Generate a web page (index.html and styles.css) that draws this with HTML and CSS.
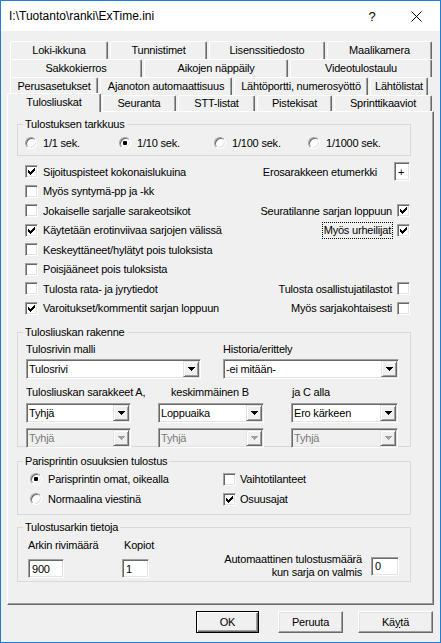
FILE: index.html
```html
<!DOCTYPE html>
<html>
<head>
<meta charset="utf-8">
<link rel="stylesheet" href="styles.css">
</head>
<body>
<div class="window">
  <div class="titlebar">
    <span class="title">I:\Tuotanto\ranki\ExTime.ini</span>
    <span class="help">?</span>
    <span class="close"><svg width="11" height="11" viewBox="0 0 11 11"><path d="M0.5 0.5L10.5 10.5M10.5 0.5L0.5 10.5" stroke="#000" stroke-width="1" fill="none"/></svg></span>
  </div>
  <div class="content">
    <div class="tabs">
      <div class="tabrow r1">
        <div class="tab">Loki-ikkuna</div>
        <div class="tab">Tunnistimet</div>
        <div class="tab">Lisenssitiedosto</div>
        <div class="tab">Maalikamera</div>
      </div>
      <div class="tabrow r2">
        <div class="tab">Sakkokierros</div>
        <div class="tab">Aikojen näppäily</div>
        <div class="tab">Videotulostaulu</div>
      </div>
      <div class="tabrow r3">
        <div class="tab">Perusasetukset</div>
        <div class="tab">Ajanoton automaattisuus</div>
        <div class="tab">Lähtöportti, numerosyöttö</div>
        <div class="tab">Lähtölistat</div>
      </div>
      <div class="tabrow r4">
        <div class="tab sel">Tulosliuskat</div>
        <div class="tab">Seuranta</div>
        <div class="tab">STT-listat</div>
        <div class="tab">Pistekisat</div>
        <div class="tab">Sprinttikaaviot</div>
      </div>
    </div>

    <div class="panel">
      <fieldset class="group g1">
        <legend>Tulostuksen tarkkuus</legend>
        <div class="radios4">
          <label class="opt"><span class="radio"></span>1/1 sek.</label>
          <label class="opt"><span class="radio"><span class="dot"></span></span>1/10 sek.</label>
          <label class="opt"><span class="radio"></span>1/100 sek.</label>
          <label class="opt"><span class="radio"></span>1/1000 sek.</label>
        </div>
      </fieldset>

      <div class="checks">
        <div class="row">
          <label class="opt"><span class="box"><svg class="tick" width="9" height="9" viewBox="0 0 9 9"><path d="M7 1h1v1h-1zM6 2h2v1h-2zM1 3h1v1h-1zM5 3h3v1h-3zM1 4h2v1h-2zM4 4h3v1h-3zM1 5h5v1h-5zM2 6h3v1h-3zM3 7h1v1h-1z"/></svg></span>Sijoituspisteet kokonaislukuina</label>
          <span class="right">Erosarakkeen etumerkki<span class="edit sign">+</span></span>
        </div>
        <div class="row">
          <label class="opt"><span class="box"></span>Myös syntymä-pp ja -kk</label>
        </div>
        <div class="row">
          <label class="opt"><span class="box"></span>Jokaiselle sarjalle sarakeotsikot</label>
          <label class="right">Seuratilanne sarjan loppuun<span class="box"><svg class="tick" width="9" height="9" viewBox="0 0 9 9"><path d="M7 1h1v1h-1zM6 2h2v1h-2zM1 3h1v1h-1zM5 3h3v1h-3zM1 4h2v1h-2zM4 4h3v1h-3zM1 5h5v1h-5zM2 6h3v1h-3zM3 7h1v1h-1z"/></svg></span></label>
        </div>
        <div class="row">
          <label class="opt"><span class="box"><svg class="tick" width="9" height="9" viewBox="0 0 9 9"><path d="M7 1h1v1h-1zM6 2h2v1h-2zM1 3h1v1h-1zM5 3h3v1h-3zM1 4h2v1h-2zM4 4h3v1h-3zM1 5h5v1h-5zM2 6h3v1h-3zM3 7h1v1h-1z"/></svg></span>Käytetään erotinviivaa sarjojen välissä</label>
          <label class="right"><span class="focus">Myös urheilijat</span><span class="box"><svg class="tick" width="9" height="9" viewBox="0 0 9 9"><path d="M7 1h1v1h-1zM6 2h2v1h-2zM1 3h1v1h-1zM5 3h3v1h-3zM1 4h2v1h-2zM4 4h3v1h-3zM1 5h5v1h-5zM2 6h3v1h-3zM3 7h1v1h-1z"/></svg></span></label>
        </div>
        <div class="row">
          <label class="opt"><span class="box"></span>Keskeyttäneet/hylätyt pois tuloksista</label>
        </div>
        <div class="row">
          <label class="opt"><span class="box"></span>Poisjääneet pois tuloksista</label>
        </div>
        <div class="row">
          <label class="opt"><span class="box"></span>Tulosta rata- ja jyrytiedot</label>
          <label class="right">Tulosta osallistujatilastot<span class="box"></span></label>
        </div>
        <div class="row">
          <label class="opt"><span class="box"><svg class="tick" width="9" height="9" viewBox="0 0 9 9"><path d="M7 1h1v1h-1zM6 2h2v1h-2zM1 3h1v1h-1zM5 3h3v1h-3zM1 4h2v1h-2zM4 4h3v1h-3zM1 5h5v1h-5zM2 6h3v1h-3zM3 7h1v1h-1z"/></svg></span>Varoitukset/kommentit sarjan loppuun</label>
          <label class="right">Myös sarjakohtaisesti<span class="box"></span></label>
        </div>
      </div>

      <fieldset class="group g2">
        <legend>Tulosliuskan rakenne</legend>
        <div class="grid2">
          <div class="lbl">Tulosrivin malli</div>
          <div class="lbl">Historia/erittely</div>
          <div class="combo"><span class="val">Tulosrivi</span><span class="drop"><svg width="7" height="4" viewBox="0 0 7 4"><path d="M0 0h7v1h-1v1h-1v1h-1v1h-1v-1h-1v-1h-1v-1h-1z"/></svg></span></div>
          <div class="combo"><span class="val">-ei mitään-</span><span class="drop"><svg width="7" height="4" viewBox="0 0 7 4"><path d="M0 0h7v1h-1v1h-1v1h-1v1h-1v-1h-1v-1h-1v-1h-1z"/></svg></span></div>
        </div>
        <div class="grid3">
          <div class="lbl">Tulosliuskan sarakkeet A,</div>
          <div class="lbl lb">keskimmäinen B</div>
          <div class="lbl lc">ja C alla</div>
          <div class="combo"><span class="val">Tyhjä</span><span class="drop"><svg width="7" height="4" viewBox="0 0 7 4"><path d="M0 0h7v1h-1v1h-1v1h-1v1h-1v-1h-1v-1h-1v-1h-1z"/></svg></span></div>
          <div class="combo"><span class="val">Loppuaika</span><span class="drop"><svg width="7" height="4" viewBox="0 0 7 4"><path d="M0 0h7v1h-1v1h-1v1h-1v1h-1v-1h-1v-1h-1v-1h-1z"/></svg></span></div>
          <div class="combo"><span class="val">Ero kärkeen</span><span class="drop"><svg width="7" height="4" viewBox="0 0 7 4"><path d="M0 0h7v1h-1v1h-1v1h-1v1h-1v-1h-1v-1h-1v-1h-1z"/></svg></span></div>
          <div class="combo dis"><span class="val">Tyhjä</span><span class="drop"><svg width="7" height="4" viewBox="0 0 7 4"><path d="M0 0h7v1h-1v1h-1v1h-1v1h-1v-1h-1v-1h-1v-1h-1z"/></svg></span></div>
          <div class="combo dis"><span class="val">Tyhjä</span><span class="drop"><svg width="7" height="4" viewBox="0 0 7 4"><path d="M0 0h7v1h-1v1h-1v1h-1v1h-1v-1h-1v-1h-1v-1h-1z"/></svg></span></div>
          <div class="combo dis"><span class="val">Tyhjä</span><span class="drop"><svg width="7" height="4" viewBox="0 0 7 4"><path d="M0 0h7v1h-1v1h-1v1h-1v1h-1v-1h-1v-1h-1v-1h-1z"/></svg></span></div>
        </div>
      </fieldset>

      <fieldset class="group g3">
        <legend>Parisprintin osuuksien tulostus</legend>
        <div class="pgrid">
          <label class="opt"><span class="radio"><span class="dot"></span></span>Parisprintin omat, oikealla</label>
          <label class="opt o2"><span class="box"></span>Vaihtotilanteet</label>
          <label class="opt"><span class="radio"></span>Normaalina viestinä</label>
          <label class="opt o2"><span class="box"><svg class="tick" width="9" height="9" viewBox="0 0 9 9"><path d="M7 1h1v1h-1zM6 2h2v1h-2zM1 3h1v1h-1zM5 3h3v1h-3zM1 4h2v1h-2zM4 4h3v1h-3zM1 5h5v1h-5zM2 6h3v1h-3zM3 7h1v1h-1z"/></svg></span>Osuusajat</label>
        </div>
      </fieldset>

      <fieldset class="group g4">
        <legend>Tulostusarkin tietoja</legend>
        <div class="sheet">
          <div class="col c1">
            <div class="lbl">Arkin rivimäärä</div>
            <div class="edit e900">900</div>
          </div>
          <div class="col c2">
            <div class="lbl">Kopiot</div>
            <div class="edit e1">1</div>
          </div>
          <div class="auto">
            <div class="autotext">Automaattinen tulostusmäärä<br>kun sarja on valmis</div>
            <div class="edit e0">0</div>
          </div>
        </div>
      </fieldset>
    </div>

    <div class="buttons">
      <div class="btn default ok">OK</div>
      <div class="btn cancel">Peruuta</div>
      <div class="btn apply">Kä<u>y</u>tä</div>
    </div>
  </div>
</div>
</body>
</html>
```
FILE: styles.css
```css
* { box-sizing: border-box; }
html, body { margin: 0; padding: 0; background: #f0f0f0; }
body {
  font-family: "Liberation Sans", Arial, sans-serif;
  font-size: 11px;
  letter-spacing: -0.2px;
  color: #000;
}
.window {
  width: 441px;
  height: 643px;
  border: 1px solid #1c7fd5;
  background: #f0f0f0;
  display: flex;
  flex-direction: column;
}
.titlebar {
  height: 30px;
  background: #fff;
  display: flex;
  align-items: center;
  flex: none;
  letter-spacing: 0;
}
.title { font-size: 12px; padding-left: 8px; flex: 1; }
.help { font-size: 13px; width: 12px; margin-right: 33px; text-align: center; }
.close { width: 11px; height: 11px; margin-right: 18px; display: flex; }

.content { padding: 0 6px; flex: 1; display: flex; flex-direction: column; }

/* tabs */
.tabs { margin-top: 10px; padding-left: 3px; }
.tabrow { display: flex; gap: 2px; height: 18px; align-items: flex-start; }
.tab {
  height: 18px;
  background: #f0f0f0;
  border-top: 1px solid #fff;
  border-left: 1px solid #fff;
  border-right: 1px solid #696969;
  box-shadow: inset -1px 0 0 #a0a0a0;
  border-radius: 2px 2px 0 0;
  display: flex;
  align-items: center;
  justify-content: center;
  white-space: nowrap;
  padding-bottom: 1px;
  flex: none;
}
.r1 .tab:nth-child(1) { width: 98px; }
.r1 .tab:nth-child(2) { width: 97px; }
.r1 .tab:nth-child(3) { width: 116px; }
.r1 .tab:nth-child(4) { width: 105px; }
.r2 .tab:nth-child(1) { width: 132px; }
.r2 .tab:nth-child(2) { width: 144px; }
.r2 .tab:nth-child(3) { width: 142px; }
.r3 .tab:nth-child(1) { width: 88px; }
.r3 .tab:nth-child(2) { width: 132px; }
.r3 .tab:nth-child(3) { width: 134px; }
.r3 .tab:nth-child(4) { width: 58px; }
.r4 { height: 16px; }
.r4 .tab { height: 16px; }
.r4 .tab:nth-child(2) { width: 74px; }
.r4 .tab:nth-child(3) { width: 77px; }
.r4 .tab:nth-child(4) { width: 75px; }
.r4 .tab:nth-child(5) { width: 98px; }
.r4 .tab.sel {
  width: 94px;
  height: 19px;
  margin-top: -2px;
  margin-left: -3px;
  margin-right: -1px;
  position: relative;
  padding-bottom: 2px;
}

/* panel */
.panel {
  height: 494px;
  border: 1px solid;
  border-color: #fff #696969 #696969 #fff;
  box-shadow: inset -1px -1px 0 #a0a0a0;
  padding: 0 22px 0 9px;
  flex: none;
}

.group {
  border: 1px solid #d9d9d9;
  margin: 0;
  padding: 0;
  min-width: 0;
}
.group legend {
  margin-left: 5px;
  padding: 0 2px;
  line-height: 14px;
}
.g1 { margin-top: 5px; }
.radios4 {
  display: grid;
  grid-template-columns: 94px 95px 94px 1fr;
  height: 20px;
  margin: 2px 0;
  padding-left: 7px;
  align-items: center;
}
.opt { display: flex; align-items: center; white-space: nowrap; }

.radio {
  width: 12px;
  height: 12px;
  border-radius: 50%;
  background: #fff;
  border: 1px solid;
  border-color: #a0a0a0 #fff #fff #a0a0a0;
  box-shadow: inset 1px 1px 0 #696969, inset -1px -1px 0 #e3e3e3;
  margin-right: 6px;
  display: flex;
  align-items: center;
  justify-content: center;
  flex: none;
}
.dot { width: 4px; height: 4px; border-radius: 1px; background: #000; }

.box {
  width: 13px;
  height: 13px;
  background: #fff;
  border: 1px solid;
  border-color: #a0a0a0 #fff #fff #a0a0a0;
  box-shadow: inset 1px 1px 0 #696969, inset -1px -1px 0 #e3e3e3;
  margin-right: 5px;
  padding: 1px;
  display: flex;
  flex: none;
}
.tick { display: block; shape-rendering: crispEdges; fill: #000; }

.checks { margin: 6px 1px 0 8px; }
.row {
  height: 19.5px;
  display: flex;
  align-items: center;
  justify-content: space-between;
}
.right { display: flex; align-items: center; white-space: nowrap; }
.right .box { margin-right: 0; margin-left: 5px; }
.focus {
  border: 1px dotted #000;
  padding: 1px 1px;
  line-height: 13px;
  margin-right: -1px;
}

.edit {
  background: #fff;
  border: 1px solid;
  border-color: #a0a0a0 #fff #fff #a0a0a0;
  box-shadow: inset 1px 1px 0 #696969, inset -1px -1px 0 #e3e3e3;
  height: 19px;
  padding: 0 3px;
  display: flex;
  align-items: center;
}
.sign { width: 16px; margin-left: 17px; padding: 0 0 0 3px; }

.g2 { margin-top: 7px; }
.grid2 {
  display: grid;
  grid-template-columns: 175px 176px;
  column-gap: 22px;
  grid-template-rows: 14px 20px;
  row-gap: 3px;
  padding: 3px 10px 0 8px;
}
.grid3 {
  display: grid;
  grid-template-columns: 105px 106px 107px;
  column-gap: 27px;
  grid-template-rows: 14px 20px 20px;
  padding: 6px 10px 7px 8px;
}
.grid3 .combo { margin-top: 4px; }
.grid3 .combo.dis { margin-top: 9px; }
.lbl { line-height: 14px; white-space: nowrap; }
.lb { padding-left: 13px; }
.lc { padding-left: 1px; }
.combo {
  height: 20px;
  background: #fff;
  border: 1px solid;
  border-color: #a0a0a0 #fff #fff #a0a0a0;
  box-shadow: inset 1px 1px 0 #696969, inset -1px -1px 0 #e3e3e3;
  padding: 1px;
  display: flex;
  align-items: stretch;
}
.combo .val { flex: 1; padding-left: 1px; display: flex; align-items: center; white-space: nowrap; overflow: hidden; }
.drop {
  width: 16px;
  background: #f0f0f0;
  border: 1px solid;
  border-color: #e3e3e3 #696969 #696969 #e3e3e3;
  box-shadow: inset 1px 1px 0 #fff, inset -1px -1px 0 #a0a0a0;
  display: flex;
  align-items: center;
  justify-content: center;
  flex: none;
}
.drop svg { display: block; shape-rendering: crispEdges; fill: #000; }
.combo.dis { background: #f0f0f0; color: #7a7a7a; }
.combo.dis .drop svg { fill: #a0a0a0; }

.g3 { margin-top: 7px; }
.pgrid {
  display: grid;
  grid-template-columns: 193px 1fr;
  grid-auto-rows: 20px;
  padding: 1px 0 5px 12px;
  align-items: center;
}
.pgrid .box { margin-right: 4px; }

.g4 { margin-top: 5px; }
.sheet {
  display: flex;
  padding: 4px 11px 3px 10px;
}
.col { display: flex; flex-direction: column; }
.c1 { width: 94px; }
.c1 .lbl { padding-left: 0; }
.c2 .lbl { padding-left: 2px; }
.col .edit { margin-top: 7px; }
.e900 { width: 36px; }
.e1 { width: 27px; }
.auto {
  margin-left: auto;
  align-self: flex-end;
  display: flex;
  align-items: center;
  gap: 9px;
  margin-bottom: -1px;
}
.autotext { text-align: right; line-height: 13px; white-space: nowrap; }
.e0 { width: 28px; }

/* buttons */
.buttons {
  display: flex;
  justify-content: flex-end;
  margin-top: 6px;
  padding-right: 1px;
}
.btn {
  height: 22px;
  background: #f0f0f0;
  border: 1px solid;
  border-color: #fff #696969 #696969 #fff;
  box-shadow: inset -1px -1px 0 #a0a0a0, inset 1px 1px 0 #e3e3e3;
  display: flex;
  align-items: center;
  justify-content: center;
}
.btn.default {
  border: 1px solid #000;
  box-shadow: inset 1px 1px 0 #fff, inset -1px -1px 0 #696969, inset -2px -2px 0 #a0a0a0;
}
.ok { width: 63px; margin-right: 19px; }
.cancel { width: 65px; margin-right: 15px; }
.apply { width: 75px; }
```
